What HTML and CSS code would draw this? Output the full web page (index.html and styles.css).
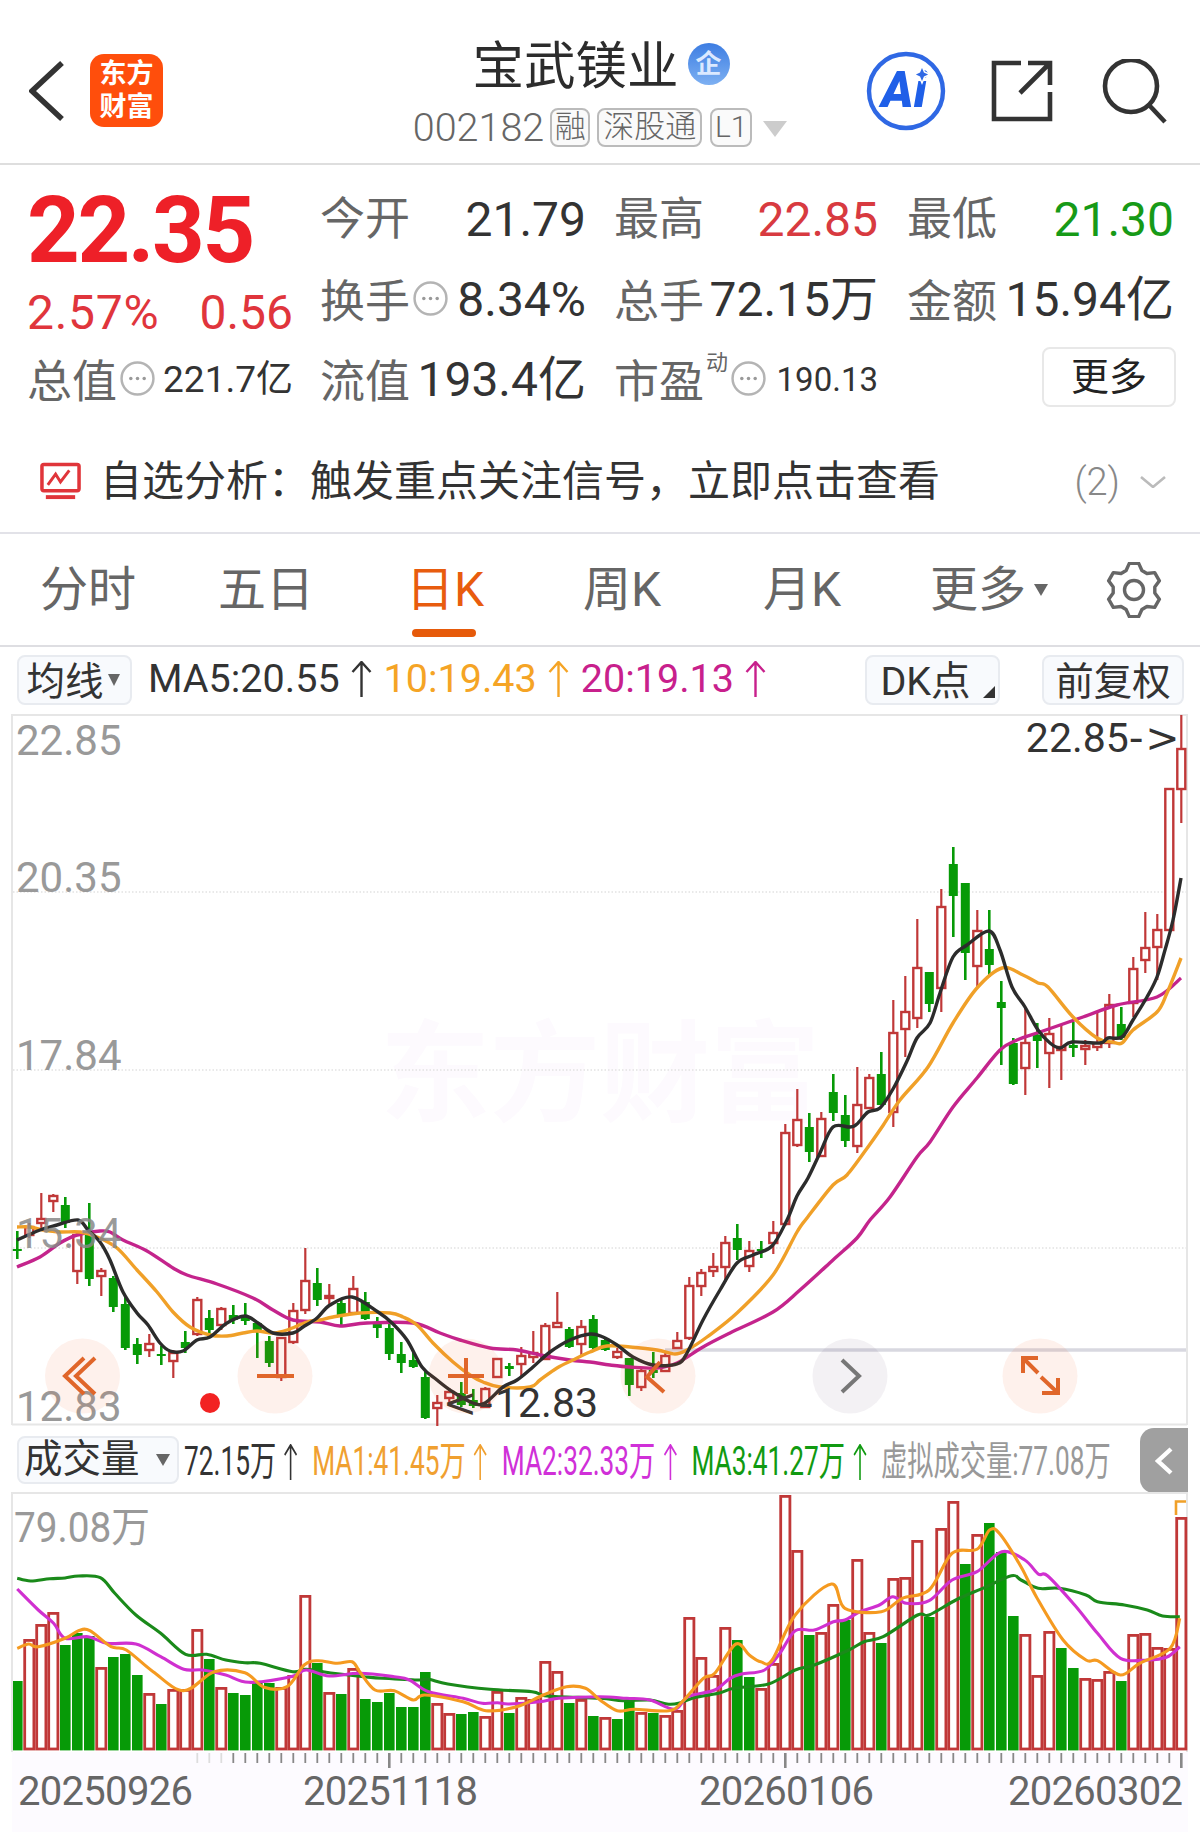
FILE: index.html
```html
<!DOCTYPE html>
<html lang="zh-CN">
<head>
<meta charset="utf-8">
<title>宝武镁业 002182</title>
<link rel="stylesheet" href="styles.css">
</head>
<body>
<svg class="defs" width="0" height="0">
  <symbol id="up" viewBox="0 0 23 36"><path d="M11.5 1V36M2.5 11L11.5 1L20.5 11" fill="none" stroke="currentColor" stroke-width="2.4"/></symbol>
  <symbol id="info" viewBox="0 0 34 34"><circle cx="17" cy="17" r="15.5" fill="none" stroke="#b4b4b4" stroke-width="2.4"/><circle cx="10.5" cy="17" r="1.7" fill="#999"/><circle cx="17" cy="17" r="1.7" fill="#999"/><circle cx="23.5" cy="17" r="1.7" fill="#999"/></symbol>
</svg>
<div class="page">
  <header class="topbar">
    <div class="top-left">
      <svg class="back" viewBox="0 0 36 60"><path d="M33 2L3 30L33 58" fill="none" stroke="#333" stroke-width="5.5"/></svg>
      <div class="logo">东方<br>财富</div>
    </div>
    <div class="top-center">
      <div class="title-row"><span class="title">宝武镁业</span><span class="badge">企</span></div>
      <div class="code-row">
        <span class="code">002182</span>
        <span class="tag tag-rong">融</span>
        <span class="tag tag-sgt">深股通</span>
        <span class="tag tag-l1">L1</span>
        <span class="caret"></span>
      </div>
    </div>
    <div class="top-right">
      <svg class="ic-ai" viewBox="0 0 80 80">
        <circle cx="40" cy="40" r="37" fill="#fff" stroke="#2f68e4" stroke-width="4.4"/>
        <text x="38" y="56" class="ai-text">Ai</text>
        <path d="M56 15L58.5 21L64 23.5L58.5 26L56 32L53.5 26L48 23.5L53.5 21Z" fill="#2f68e4" stroke="#fff" stroke-width="1.5"/>
      </svg>
      <svg class="ic-share" viewBox="0 0 62 62"><path d="M30 3H3V59H59V32M37 3H59V25M58 4L29 33" fill="none" stroke="#333" stroke-width="4.6"/></svg>
      <svg class="ic-search" viewBox="0 0 65 65"><circle cx="29" cy="27" r="26" fill="none" stroke="#333" stroke-width="4.6"/><path d="M47 46L63 63" stroke="#333" stroke-width="4.6"/></svg>
    </div>
  </header>

  <section class="quote">
    <div class="cell cell-price"><span class="price">22.35</span></div>
    <div class="cell"><span class="lbl">今开</span><span class="val">21.79</span></div>
    <div class="cell"><span class="lbl">最高</span><span class="val up-c">22.85</span></div>
    <div class="cell"><span class="lbl">最低</span><span class="val down-c">21.30</span></div>

    <div class="cell cell-change"><span class="chg">2.57%</span><span class="chg">0.56</span></div>
    <div class="cell"><span class="lbl lbl-low">换手<svg class="info"><use href="#info"/></svg></span><span class="val">8.34%</span></div>
    <div class="cell"><span class="lbl lbl-low">总手</span><span class="val">72.15万</span></div>
    <div class="cell"><span class="lbl lbl-low">金额</span><span class="val">15.94亿</span></div>

    <div class="cell"><span class="lbl lbl-low">总值<svg class="info"><use href="#info"/></svg></span><span class="val val-sm">221.7亿</span></div>
    <div class="cell"><span class="lbl lbl-low">流值</span><span class="val">193.4亿</span></div>
    <div class="cell"><span class="lbl lbl-low">市盈<sup class="dyn">动</sup><svg class="info"><use href="#info"/></svg></span><span class="val val-xs">190.13</span></div>
    <div class="cell cell-more"><span class="more-btn">更多</span></div>
  </section>

  <section class="alert">
    <svg class="alert-ic" viewBox="0 0 42 38">
      <rect x="2" y="2" width="38" height="27" rx="2" fill="none" stroke="#e0353a" stroke-width="3.6"/>
      <path d="M8 23L16 12L21 20L30 8" fill="none" stroke="#e0353a" stroke-width="3"/>
      <rect x="6" y="33.5" width="30" height="4" fill="#e0353a"/>
    </svg>
    <span class="alert-text">自选分析：触发重点关注信号，立即点击查看</span>
    <span class="alert-count">(2)</span>
    <svg class="alert-chev" viewBox="0 0 28 12"><path d="M2 1L14 11L26 1" fill="none" stroke="#bbb" stroke-width="2.6"/></svg>
  </section>

  <nav class="tabs">
    <span class="tab">分时</span>
    <span class="tab">五日</span>
    <span class="tab active">日K</span>
    <span class="tab">周K</span>
    <span class="tab">月K</span>
    <span class="tab tab-more">更多<i class="tab-caret"></i></span>
    <svg class="gear" viewBox="0 0 56 56">
      <path d="M20.1 8.5L23.3 1.4H32.7L35.9 8.5L40.9 11.5L48.7 10.6L53.4 18.8L48.8 25.1V30.9L53.4 37.2L48.7 45.4L40.9 44.5L35.9 47.5L32.7 54.6H23.3L20.1 47.5L15.1 44.5L7.3 45.4L2.6 37.2L7.2 30.9V25.1L2.6 18.8L7.3 10.6L15.1 11.5Z" fill="none" stroke="#666" stroke-width="3.4" stroke-linejoin="round"/>
      <circle cx="28" cy="28" r="9.5" fill="none" stroke="#666" stroke-width="3.4"/>
    </svg>
  </nav>

  <section class="ma-row">
    <span class="chip chip-ma">均线<i class="chip-caret"></i></span>
    <span class="ma ma-a">MA5:20.55<svg class="arrow"><use href="#up"/></svg></span>
    <span class="ma ma-b">10:19.43<svg class="arrow"><use href="#up"/></svg></span>
    <span class="ma ma-c">20:19.13<svg class="arrow"><use href="#up"/></svg></span>
    <span class="chip chip-dk">DK点<i class="corner"></i></span>
    <span class="chip chip-fq">前复权</span>
  </section>

  <svg class="kline" id="kline" viewBox="0 714 1200 711">
    <text x="380" y="1113" class="watermark">东方财富</text>
    <path class="frame" d="M12 1425V715H1187V1425M12 1424.5H1187"/>
    <path class="grid" d="M13 892H1186M13 1070H1186M13 1248H1186"/>
    <path class="band" d="M665 1350H1186"/>
    <g id="candles"></g>
    <g id="malines"></g>
    <text x="16" y="755" class="axis">22.85</text>
    <text x="16" y="892" class="axis">20.35</text>
    <text x="16" y="1070" class="axis">17.84</text>
    <text x="16" y="1248" class="axis axis-over">15.34</text>
    <text x="16" y="1421" class="axis">12.83</text>
    <text x="1181" y="752" class="mark">22.85<tspan class="mark-sym">-&gt;</tspan></text>
    <text x="598" y="1417" class="mark"><tspan class="mark-sym">&lt;-</tspan>12.83</text>
    <circle cx="210" cy="1403" r="10" fill="#f22222"/>
    <circle cx="82.5" cy="1376" r="37.5" class="pad"/>
    <circle cx="275" cy="1376" r="37.5" class="pad"/>
    <circle cx="466" cy="1376" r="37.5" class="pad"/>
    <circle cx="658" cy="1376" r="37.5" class="pad"/>
    <circle cx="850" cy="1376" r="37.5" class="pad pad-grey"/>
    <circle cx="1040" cy="1376" r="37.5" class="pad"/>
    <path class="ctl" d="M84 1358L65 1376L84 1394M95 1358L76 1376L95 1394"/>
    <path class="ctl" d="M257 1376H294"/>
    <path class="ctl" d="M448 1376H484M466 1358V1394"/>
    <path class="ctl" d="M660 1362L647 1377L664 1392"/>
    <path class="ctl ctl-grey" d="M842 1360L859 1376L842 1392"/>
    <path class="ctl" d="M1023 1373V1358H1038M1023 1358L1038 1373M1058 1378V1393H1042M1058 1393L1041 1377"/>
  </svg>

  <section class="vol-row">
    <span class="chip chip-vol">成交量<i class="vol-caret"></i></span>
    <div class="vol-clip">
      <div class="vol-values">
        <span class="vv vv-a">72.15万<svg class="arrow"><use href="#up"/></svg></span>
        <span class="vv vv-b">MA1:41.45万<svg class="arrow"><use href="#up"/></svg></span>
        <span class="vv vv-c">MA2:32.33万<svg class="arrow"><use href="#up"/></svg></span>
        <span class="vv vv-d">MA3:41.27万<svg class="arrow"><use href="#up"/></svg></span>
        <span class="vv vv-e">虚拟成交量:77.08万</span>
      </div>
    </div>
    <span class="collapse"><svg viewBox="0 0 18 28"><path d="M16 2L3 14L16 26" fill="none" stroke="#fff" stroke-width="4.4"/></svg></span>
  </section>

  <svg class="volume" id="volume" viewBox="0 1492 1200 340">
    <rect x="12" y="1752" width="1176" height="80" fill="#fdfbff"/>
    <path class="frame" d="M12 1752V1493H1187V1752"/>
    <g id="vbars"></g>
    <g id="vlines"></g>
    <g id="ticks"></g>
    <text x="14" y="1542" class="axis" textLength="136" lengthAdjust="spacingAndGlyphs">79.08万</text>
    <text x="18" y="1805" class="date">20250926</text>
    <text x="303" y="1805" class="date">20251118</text>
    <text x="699" y="1805" class="date">20260106</text>
    <text x="1008" y="1805" class="date">20260302</text>
  </svg>
</div>
<script src="chart.js"></script>
</body>
</html>
```
FILE: styles.css
```css
* { box-sizing: border-box; }
html, body { margin: 0; padding: 0; background: #fff; }
body {
  width: 1200px;
  height: 1832px;
  overflow: hidden;
  font-family: Roboto, "Noto Sans CJK SC", sans-serif;
  color: #333;
}
.defs { display: block; height: 0; }
.page { width: 1200px; }

/* header */
.topbar {
  display: grid;
  grid-template-columns: 1fr auto 1fr;
  height: 165px;
  border-bottom: 2px solid #dedede;
}
.top-left { display: flex; align-items: center; gap: 25px; padding: 54px 0 0 29px; height: 127px; }
.back { width: 36px; height: 60px; flex: none; }
.logo {
  width: 73px; height: 73px; flex: none;
  background: #ff4e0c; border-radius: 14px;
  color: #fff; font-weight: 700; font-size: 27px; line-height: 33px;
  text-align: center; padding-top: 4px;
}
.top-center { padding-top: 35px; }
.title-row { display: flex; align-items: center; justify-content: center; gap: 9px; height: 58px; padding-left: 2px; }
.title { font-size: 51.5px; line-height: 58px; padding-top: 5px; font-weight: 400; color: #2c2c2c; }
.badge {
  width: 42px; height: 42px; border-radius: 50%;
  background: linear-gradient(#3d7de2, #7db0f2);
  color: #dbe9ff; font-size: 26px; line-height: 42px; text-align: center; font-weight: 700;
}
.code-row { display: flex; align-items: center; margin-top: 15px; height: 39px; }
.code { font-size: 39.5px; line-height: 39px; font-weight: 300; color: #666; margin-right: 6px; }
.tag {
  height: 39px; border: 2px solid #bbb; border-radius: 8px;
  font-size: 31px; line-height: 34px; color: #666; text-align: center; font-weight: 300;
  background: #fafafa;
}
.tag-rong { width: 40px; margin-right: 7px; overflow: hidden; }
.tag-sgt { width: 105px; margin-right: 8px; white-space: nowrap; }
.tag-l1 { width: 42px; margin-right: 11px; font-size: 30px; }
.caret {
  width: 0; height: 0; margin-top: 3px;
  border-left: 12px solid transparent; border-right: 12px solid transparent;
  border-top: 16px solid #ccc;
}
.top-right { display: flex; align-items: center; justify-content: flex-end; padding: 52px 33px 0 0; height: 130px; }
.ic-ai { width: 80px; height: 80px; flex: none; margin-right: 45px; }
.ic-share { width: 62px; height: 62px; flex: none; margin-right: 49px; }
.ic-search { width: 65px; height: 65px; flex: none; }
.ai-text { font: italic 900 49px Roboto, sans-serif; fill: #1f5fe8; text-anchor: middle; }

/* quote */
.quote {
  display: grid;
  grid-template-columns: 293px 294px 293px 267px;
  grid-auto-rows: 80px;
  padding: 15px 0 0 27px;
  height: 255px;
}
.cell { display: flex; align-items: center; justify-content: space-between; white-space: nowrap; }
.quote .cell:nth-child(4n+2) { padding-right: 28px; }
.quote .cell:nth-child(4n+3) { padding-right: 29px; }
.quote .cell:nth-child(4n+1) { padding-right: 27px; }
.cell-price { padding-top: 22px; }
.price { font-size: 92px; line-height: 58px; font-weight: 700; color: #ee2028; letter-spacing: -2.4px; }
.cell-change { padding-top: 26px; }
.chg { font-size: 48px; line-height: 54px; color: #e0353c; }
.chg:first-child { letter-spacing: .7px; }
.lbl { display: inline-flex; align-items: center; font-size: 45px; line-height: 60px; color: #666; }
.lbl-low { height: 60px; padding-top: 6px; }
.val { font-size: 48px; line-height: 62px; color: #333; }
.val-sm { font-size: 37px; }
.val-xs { font-size: 33px; }
.up-c { color: #d83a40; }
.down-c { color: #179a17; }
.info { width: 35px; height: 35px; margin: -10px 0 0 3px; flex: none; }
.dyn { align-self: flex-start; margin: -5px 0 0 2px; font-size: 22px; line-height: 24px; color: #666; }
.cell-more { justify-content: flex-end; padding: 0 0 6px 0; margin-right: -2px; }
.more-btn {
  width: 134px; height: 60px; border: 2px solid #e8e8e8; border-radius: 8px;
  font-size: 38px; line-height: 56px; text-align: center; color: #222;
}

/* alert */
.alert {
  display: flex; align-items: center;
  height: 114px; padding: 12px 33px 0 40px;
  border-bottom: 2px solid #e2e2e8;
}
.alert-ic { width: 41px; height: 38px; flex: none; margin-top: -2px; }
.alert-text { font-size: 42px; line-height: 50px; color: #333; margin-left: 19px; white-space: nowrap; }
.alert-count { font-size: 38px; font-weight: 300; color: #888; margin-left: auto; }
.alert-chev { width: 28px; height: 12px; margin-left: 19px; flex: none; }

/* tabs */
.tabs {
  display: grid;
  grid-template-columns: 178px 192px 173px 180px 167px 176px 56px;
  align-items: center;
  height: 113px;
  padding: 0 0 0 40px;
  border-bottom: 2px solid #dedee2;
}
.tab { font-size: 48px; line-height: 60px; color: #666; }
.tab.active { color: #e85c0e; position: relative; margin-left: -4px; }
.tab.active::after {
  content: ""; position: absolute; left: 6px; top: 69px;
  width: 64px; height: 8px; border-radius: 4px; background: #e65a0a;
}
.tab-more { display: flex; align-items: center; }
.tab-caret {
  margin-left: 8px; width: 0; height: 0;
  border-left: 7.5px solid transparent; border-right: 7.5px solid transparent;
  border-top: 12px solid #666;
}
.gear { width: 56px; height: 56px; }

/* MA row */
.ma-row { display: flex; align-items: center; height: 67px; padding: 0 16px 2px 17px; }
.chip {
  display: inline-flex; align-items: center; justify-content: center;
  background: #f8fafd; border: 2px solid #e8ebf0; border-radius: 8px;
  height: 50px; padding-bottom: 4px; font-size: 38.5px; color: #333; white-space: nowrap; position: relative;
}
.chip-ma { width: 115px; padding-right: 3px; }
.chip-caret {
  margin: 4px 0 0 4px; width: 0; height: 0;
  border-left: 6.5px solid transparent; border-right: 6.5px solid transparent;
  border-top: 12px solid #666;
}
.ma { display: inline-flex; align-items: center; font-size: 39.5px; line-height: 44px; white-space: nowrap; margin: -2px 11px 0 0; }
.ma-a { color: #333; margin-left: 16px; }
.ma-b { color: #f5a425; }
.ma-c { color: #c8208c; }
.arrow { width: 23px; height: 36px; margin-left: 10px; flex: none; }
.chip-dk { width: 135px; margin-left: auto; padding-right: 14px; font-size: 39.5px; }
.corner {
  position: absolute; right: 3px; bottom: 5px; width: 0; height: 0;
  border-left: 12px solid transparent; border-bottom: 12px solid #333;
}
.chip-fq { width: 142px; margin-left: 42px; }

/* charts */
.kline, .volume { display: block; width: 1200px; overflow: visible; }
.kline { height: 711px; }
.volume { height: 340px; }
.frame { fill: none; stroke: #e6e6e6; stroke-width: 2; }
.grid { fill: none; stroke: #e2e2e2; stroke-width: 1.4; stroke-dasharray: 1.5 2; }
.band { fill: none; stroke: #d8d8e0; stroke-width: 3.5; }
.watermark { font-size: 110px; font-weight: 700; fill: #fdfafe; }
.axis { font-size: 42px; fill: #999; }
.axis-over { fill: #888; fill-opacity: .85; }
.mark { font-size: 41px; fill: #333; text-anchor: end; }
.mark-sym { font-family: "DejaVu Sans", sans-serif; letter-spacing: 1.5px; }
.pad { fill: rgb(240, 100, 40); fill-opacity: .09; }
.pad-grey { fill: rgb(90, 70, 110); fill-opacity: .075; }
.ctl { fill: none; stroke: #e0662a; stroke-width: 4; }
.ctl-grey { stroke: #777; }
.date { font-size: 40px; fill: #666; letter-spacing: -.7px; }

/* volume row */
.vol-row { display: flex; align-items: center; height: 67px; padding: 3px 12px 0 17px; }
.chip-vol { width: 162px; flex: none; height: 48px; font-size: 38.5px; line-height: 40px; justify-content: flex-start; padding: 0 0 3px 5px; }
.vol-caret {
  margin: 3px 0 0 16px; width: 0; height: 0;
  border-left: 7.5px solid transparent; border-right: 7.5px solid transparent;
  border-top: 12px solid #666;
}
.vol-clip { flex: 1; min-width: 0; margin: 3px 0 0 5px; }
.vol-values {
  display: flex; align-items: center; gap: 21px; width: max-content;
  transform: scaleX(.656); transform-origin: 0 50%;
  font-size: 40px; line-height: 46px; white-space: nowrap;
}
.vv { display: inline-flex; align-items: center; }
.vv .arrow { margin-left: 11px; }
.vv-a { color: #333; }
.vv-b { color: #f0a030; }
.vv-c { color: #d030d8; }
.vv-d { color: #119a11; }
.vv-e { color: #999; }
.collapse {
  flex: none; align-self: flex-start; width: 48px; height: 65px;
  background: #a0a0a0; border-radius: 14px 0 0 14px;
  display: flex; align-items: center; justify-content: center;
}
.collapse svg { width: 18px; height: 28px; }
```
FILE: chart.js
```js
(function () {
  var NS = 'http://www.w3.org/2000/svg';
  var RED = '#c03838', GREEN = '#079a07';

  function el(parent, name, attrs) {
    var n = document.createElementNS(NS, name);
    for (var k in attrs) n.setAttribute(k, attrs[k]);
    parent.appendChild(n);
    return n;
  }

  // [kind, wickTop, bodyTop, bodyBottom, wickBottom] in chart pixels
  var candles = [
    ['g',1231,1249,1251,1259],['r',1223,1227,1235,1238],['r',1193,1219,1223,1228],['r',1194,1196,1201,1212],
    ['g',1197,1205,1223,1228],['r',1232,1235,1271,1284],['g',1203,1235,1279,1286],['r',1268,1271,1276,1296],
    ['g',1276,1278,1307,1312],['g',1297,1304,1348,1350],['g',1338,1344,1355,1364],['r',1334,1344,1350,1357],
    ['g',1346,1354,1356,1365],['r',1350,1353,1361,1378],['g',1331,1342,1348,1353],['r',1297,1300,1334,1336],
    ['g',1310,1318,1330,1337],['r',1307,1309,1325,1330],['g',1305,1315,1320,1324],['g',1303,1317,1321,1325],
    ['g',1322,1323,1330,1358],['g',1336,1341,1363,1367],['r',1337,1338,1377,1381],['r',1303,1311,1342,1344],
    ['r',1248,1281,1310,1314],['g',1268,1283,1300,1306],['r',1284,1296,1298,1306],['g',1298,1303,1315,1326],
    ['r',1276,1289,1313,1315],['g',1292,1302,1319,1320],['g',1317,1323,1328,1338],['g',1323,1328,1354,1360],
    ['g',1342,1354,1363,1373],['g',1352,1360,1367,1368],['g',1370,1377,1418,1419],['r',1395,1403,1408,1426],
    ['r',1388,1392,1398,1402],['g',1382,1393,1405,1407],['g',1389,1400,1406,1408],['r',1387,1389,1407,1408],
    ['r',1359,1359,1377,1377],['g',1363,1366,1369,1376],['r',1347,1356,1364,1378],['r',1331,1353,1357,1363],
    ['r',1323,1326,1359,1360],['r',1292,1323,1327,1327],['g',1327,1329,1347,1348],['r',1320,1327,1344,1355],
    ['g',1315,1319,1348,1349],['g',1338,1340,1350,1351],['r',1348,1352,1357,1359],['g',1358,1358,1385,1396],
    ['r',1368,1371,1387,1391],['g',1352,1370,1373,1378],['r',1353,1356,1371,1371],['r',1332,1341,1348,1348],
    ['r',1277,1286,1338,1340],['r',1269,1273,1286,1296],['r',1253,1267,1271,1277],['r',1236,1243,1267,1282],
    ['g',1224,1238,1250,1260],['r',1241,1251,1266,1272],['g',1241,1249,1251,1258],['r',1221,1233,1243,1254],
    ['r',1124,1133,1224,1226],['r',1089,1120,1145,1147],['g',1113,1127,1152,1162],['r',1112,1119,1156,1156],
    ['g',1074,1092,1113,1121],['g',1095,1115,1141,1147],['r',1067,1105,1146,1153],['r',1074,1078,1108,1108],
    ['g',1052,1074,1105,1105],['r',1000,1033,1112,1127],['r',976,1012,1029,1057],['r',919,968,1018,1028],
    ['g',972,972,1004,1012],['r',889,907,988,1012],['g',847,864,896,937],['g',883,883,953,980],
    ['r',910,931,966,987],['g',910,949,965,977],['g',981,1002,1008,1065],['g',1038,1043,1084,1085],
    ['r',1008,1043,1068,1095],['g',1023,1035,1041,1068],['r',1018,1034,1053,1088],['r',1025,1047,1050,1080],
    ['g',1022,1045,1048,1057],['r',1040,1046,1049,1065],['r',1013,1043,1047,1051],['r',994,1005,1043,1048],
    ['g',1007,1024,1038,1040],['r',957,969,1003,1017],['r',912,948,960,973],['r',914,930,947,980],
    ['r',789,789,930,930],['r',715,749,789,823]
  ];

  var candleG = document.getElementById('candles');
  candles.forEach(function (c, i) {
    var x = 17.3 + 12 * i, red = c[0] === 'r', col = red ? RED : GREEN;
    el(candleG, 'line', { x1: x, x2: x, y1: c[1], y2: c[4], stroke: col, 'stroke-width': red ? 2.2 : 2.6 });
    if (red) {
      el(candleG, 'rect', { x: x - 4, y: c[2], width: 8, height: Math.max(c[3] - c[2], 2), fill: '#fff', stroke: col, 'stroke-width': 2.4 });
    } else {
      el(candleG, 'rect', { x: x - 4.5, y: c[2], width: 9, height: Math.max(c[3] - c[2], 2), fill: col });
    }
  });

  // Smooth curve through points
  function curve(p) {
    var d = 'M' + p[0][0] + ' ' + p[0][1];
    for (var i = 0; i < p.length - 1; i++) {
      var a = p[Math.max(i - 1, 0)], b = p[i], c = p[i + 1], e = p[Math.min(i + 2, p.length - 1)];
      d += 'C' + (b[0] + (c[0] - a[0]) / 6).toFixed(1) + ' ' + (b[1] + (c[1] - a[1]) / 6).toFixed(1) + ' ' +
        (c[0] - (e[0] - b[0]) / 6).toFixed(1) + ' ' + (c[1] - (e[1] - b[1]) / 6).toFixed(1) + ' ' + c[0] + ' ' + c[1];
    }
    return d;
  }
  function pairs(a) {
    var o = [];
    for (var i = 0; i < a.length; i += 2) o.push([a[i], a[i + 1]]);
    return o;
  }

  var ma20 = [17,1267,40,1257,60,1243,77,1235,100,1231,110,1232,123,1240,147,1251,173,1268,187,1275,217,1284,253,1298,273,1310,293,1320,320,1322,340,1326,367,1323,413,1323,440,1333,460,1340,490,1348,517,1350,540,1355,570,1360,590,1362,610,1365,630,1367,657,1368,677,1363,703,1347,730,1333,773,1312,800,1290,833,1260,857,1238,870,1220,890,1197,917,1157,930,1142,953,1107,977,1078,1000,1050,1017,1040,1040,1032,1083,1017,1117,1005,1157,997,1181,978];
  var ma10 = [17,1227,30,1227,43,1230,60,1232,80,1232,97,1237,117,1248,137,1270,157,1292,173,1312,190,1327,210,1335,227,1336,243,1333,257,1331,273,1333,287,1330,307,1322,320,1320,333,1317,360,1313,390,1313,403,1317,417,1325,433,1343,453,1362,470,1375,483,1382,500,1387,530,1387,540,1380,557,1368,573,1360,590,1352,607,1346,630,1347,657,1350,675,1354,687,1350,707,1337,737,1313,773,1275,797,1232,807,1218,833,1185,847,1175,868,1147,882,1127,900,1100,928,1067,953,1023,977,988,1002,968,1023,975,1038,983,1048,987,1073,1017,1097,1038,1112,1042,1122,1043,1133,1030,1157,1012,1167,993,1181,958];
  var ma5 = [17,1240,40,1230,57,1225,78,1220,88,1230,100,1242,110,1260,123,1292,137,1313,148,1325,160,1343,170,1351,183,1351,197,1340,210,1337,227,1323,245,1316,258,1323,273,1333,293,1333,303,1327,317,1318,330,1305,352,1297,378,1312,392,1323,407,1340,422,1367,437,1380,453,1392,473,1403,485,1403,503,1387,517,1380,533,1367,550,1352,570,1340,590,1334,603,1337,617,1345,633,1357,653,1365,677,1364,687,1353,703,1320,720,1290,737,1263,753,1255,772,1246,787,1220,797,1196,808,1178,820,1153,833,1127,850,1127,857,1124,868,1112,880,1108,893,1089,907,1061,917,1038,930,1023,940,993,953,957,967,945,989,931,1000,950,1012,987,1025,1007,1038,1030,1050,1043,1060,1048,1072,1042,1100,1043,1108,1038,1122,1037,1133,1020,1147,997,1157,977,1165,950,1173,920,1181,878];

  var maG = document.getElementById('malines');
  [[ma20, '#c4248c'], [ma10, '#f0a028'], [ma5, '#2c2c2c']].forEach(function (l) {
    el(maG, 'path', { d: curve(pairs(l[0])), fill: 'none', stroke: l[1], 'stroke-width': 3.4 });
  });

  // Volume tops: kind and top y
  var vols = [
    ['g',1681],['r',1639],['r',1624],['r',1612],['g',1645],['g',1633],['g',1636],['r',1667],['g',1657],['g',1654],
    ['g',1675],['r',1693],['g',1704],['r',1689],['r',1689],['r',1629],['g',1659],['r',1687],['g',1693],['g',1695],
    ['g',1683],['g',1683],['r',1687],['r',1675],['r',1595],['g',1663],['r',1692],['g',1694],['r',1668],['g',1699],
    ['g',1702],['g',1693],['g',1707],['g',1707],['g',1672],['r',1703],['r',1713],['g',1714],['g',1712],['r',1716],
    ['r',1691],['g',1713],['r',1697],['r',1699],['r',1661],['r',1671],['g',1703],['r',1699],['g',1716],['r',1717],
    ['g',1719],['g',1700],['r',1712],['g',1713],['r',1715],['r',1710],['r',1617],['r',1657],['r',1675],['r',1627],
    ['g',1640],['g',1677],['r',1688],['r',1663],['r',1495],['r',1550],['g',1635],['r',1632],['r',1604],['g',1620],
    ['r',1559],['r',1632],['g',1643],['r',1578],['r',1577],['r',1540],['g',1617],['r',1528],['r',1501],['g',1564],
    ['r',1534],['g',1523],['g',1552],['g',1616],['r',1634],['r',1675],['r',1631],['g',1648],['g',1668],['r',1678],
    ['r',1679],['r',1671],['g',1681],['r',1634],['r',1633],['r',1647],['r',1648],['r',1517]
  ];
  var vbars = document.getElementById('vbars');
  vols.forEach(function (v, i) {
    var x = 17.3 + 12 * i, red = v[0] === 'r';
    if (red) {
      el(vbars, 'rect', { x: x - 4.6, y: v[1] + 1.4, width: 9.2, height: 1749 - v[1] - 1.4, fill: '#fff', stroke: RED, 'stroke-width': 2.8 });
    } else {
      var left = Math.max(x - 5.3, 13);
      el(vbars, 'rect', { x: left, y: v[1], width: x + 5.3 - left, height: 1750.4 - v[1], fill: GREEN });
    }
  });
  el(vbars, 'path', { d: 'M1176 1515V1501.5H1186', fill: 'none', stroke: '#f0a028', 'stroke-width': 2.6 });

  // Volume lines, read as [left crop, right crop] zoom coordinates
  function conv(left, right) {
    var out = [], i;
    for (i = 0; i < left.length; i += 2) out.push([+(left[i] / 2.613).toFixed(1), +(1480 + left[i + 1] / 3).toFixed(1)]);
    for (i = 0; i < right.length; i += 2) out.push([+(600 + right[i] / 2.613).toFixed(1), +(1480 + right[i + 1] / 3).toFixed(1)]);
    return out;
  }
  var vGreen = conv(
    [45,295,80,303,130,296,170,294,205,288,262,293,300,340,355,405,420,460,485,523,540,523,590,540,640,548,680,550,765,575,800,568,870,580,950,590,1000,595,1090,600,1120,598,1170,612,1280,628,1390,635,1430,648],
    [0,655,60,662,130,660,175,672,205,670,250,652,310,640,350,625,440,612,510,570,560,555,650,510,690,485,740,470,830,405,860,405,930,360,1000,325,1075,287,1100,300,1145,325,1200,325,1270,345,1300,365,1370,375,1430,390,1470,408,1515,410]);
  var vPink = conv(
    [45,327,100,390,140,430,170,475,230,470,280,490,355,492,420,530,480,568,530,570,590,585,650,607,760,590,800,570,860,588,940,580,1030,590,1070,600,1120,635,1210,655,1260,670,1300,668,1330,672,1410,665,1460,655],
    [0,650,70,655,130,660,195,688,230,650,300,630,340,595,370,582,430,570,470,520,510,452,560,450,610,425,640,420,680,395,730,375,765,350,800,370,860,362,920,300,985,275,1050,215,1110,240,1145,282,1170,288,1240,375,1300,460,1360,535,1430,540,1480,532,1515,500]);
  var vOrange = conv(
    [45,505,75,492,100,500,170,475,205,452,235,452,290,500,330,510,400,575,480,632,560,575,640,578,690,622,750,620,795,555,830,542,880,550,920,545,940,575,980,630,1030,632,1080,660,1110,645,1210,665,1270,692,1350,680,1420,645,1480,620,1530,625],
    [0,660,45,692,90,688,180,692,215,665,270,595,300,580,355,492,390,525,420,545,450,540,510,405,605,312,640,385,735,395,790,355,860,330,920,220,985,208,1018,150,1045,162,1100,260,1140,350,1210,480,1270,540,1300,542,1360,585,1410,550,1490,505,1515,415]);

  var vlines = document.getElementById('vlines');
  [[vGreen, '#1a8a1a'], [vPink, '#d030d0'], [vOrange, '#f59a20']].forEach(function (l) {
    el(vlines, 'path', { d: curve(l[0]), fill: 'none', stroke: l[1], 'stroke-width': 3.1 });
  });

  // Time axis ticks
  var ticks = document.getElementById('ticks');
  for (var i = 15; i < 98; i++) {
    var x = 17.3 + 12 * i, major = i === 31 || i === 64 || i === 97;
    el(ticks, 'line', {
      x1: x, x2: x, y1: 1753, y2: major ? 1768 : 1763,
      stroke: i < 18 ? '#ddd' : '#888', 'stroke-width': major ? 2.6 : 1.8
    });
  }
})();
```
